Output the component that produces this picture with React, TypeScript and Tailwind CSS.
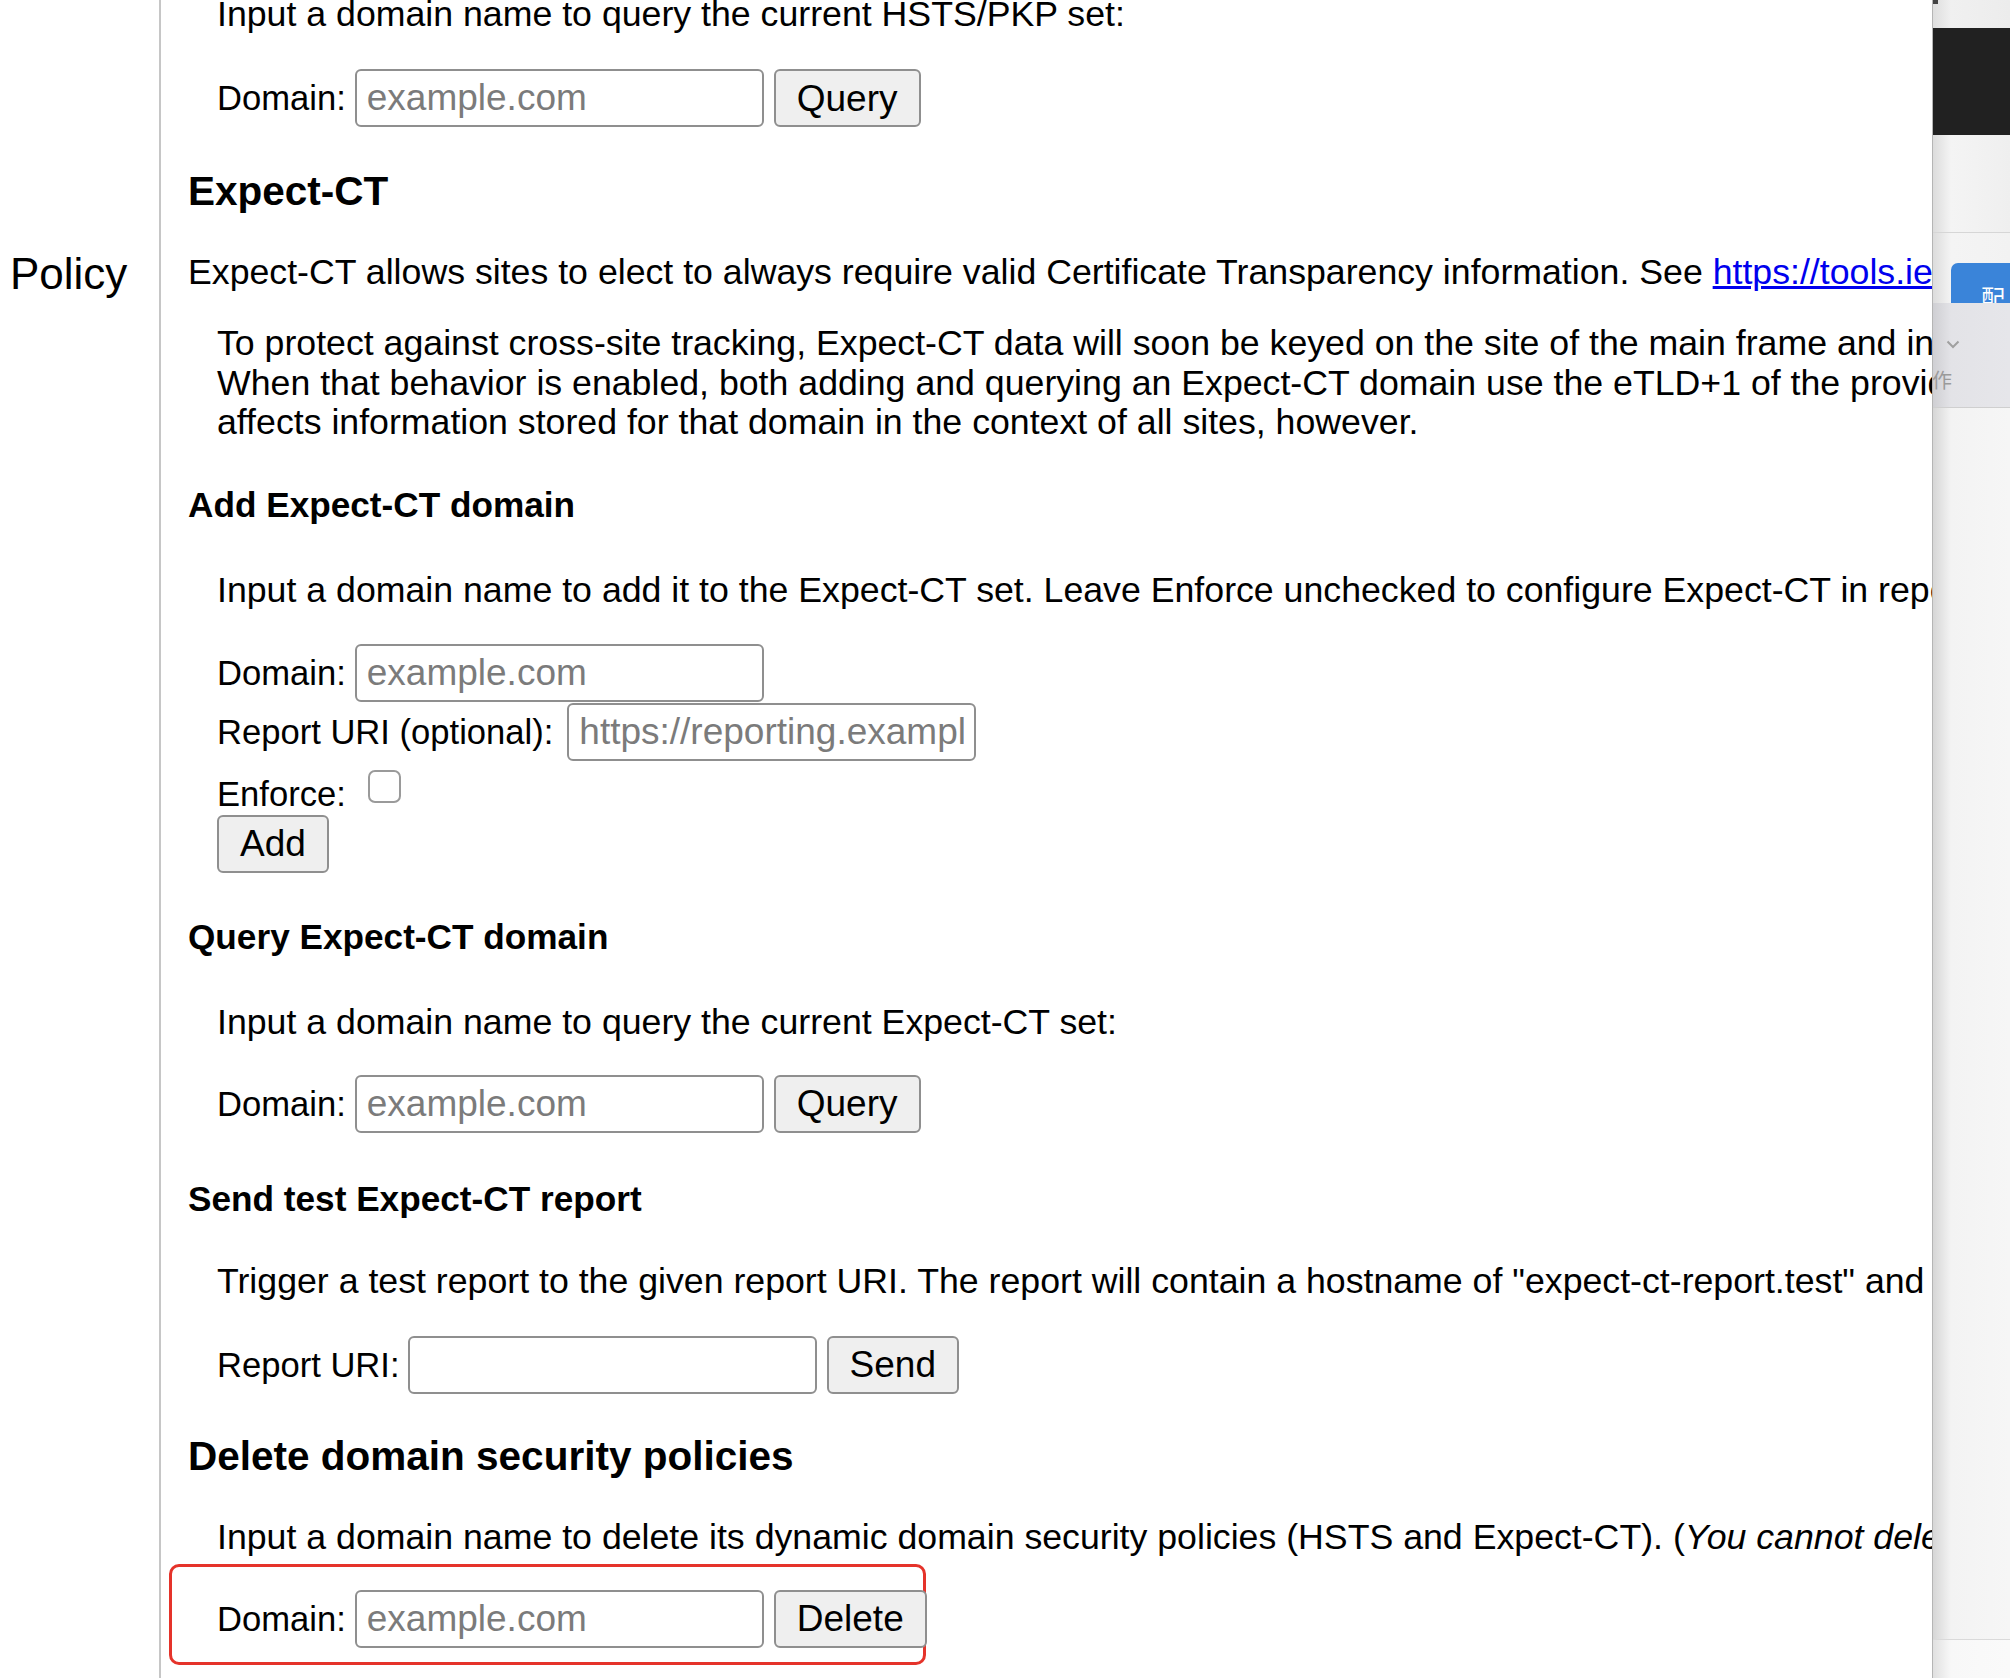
import React from "react";

const Field = ({ placeholder = "", w = "w-[409px]" }: { placeholder?: string; w?: string }) => (
  <input
    readOnly
    placeholder={placeholder}
    className={`${w} h-[58px] shrink-0 border-2 border-[#8f8f8f] rounded-[6px] bg-white px-[10px] text-[37px] text-black placeholder:text-[#7b7b7b] outline-none`}
  />
);

const Btn = ({ children }: { children: React.ReactNode }) => (
  <button className="h-[58px] shrink-0 px-[21px] border-2 border-[#8f8f8f] rounded-[6px] bg-[#efefef] text-[37px] leading-none text-black">
    {children}
  </button>
);

const Label = ({ children }: { children: React.ReactNode }) => (
  <span className="text-[34.6px]">{children}</span>
);

export default function App() {
  return (
    <div className="flex w-[2010px] h-[1678px] overflow-hidden bg-white text-black font-['Liberation_Sans',Arial,sans-serif]">
      {/* left nav column */}
      <div className="w-[161px] shrink-0 border-r-2 border-[#c6c6c6] pl-[10px] pt-[249px]">
        <div className="text-[44px] leading-[50px]">Policy</div>
      </div>

      {/* main content */}
      <div className="flex-1 min-w-0 overflow-hidden pl-[27px] flex flex-col whitespace-nowrap text-[35.7px] leading-[40px]">
        <p className="-mt-[6px] pl-[29px]">Input a domain name to query the current HSTS/PKP set:</p>
        <div className="mt-[35px] pl-[29px] flex items-center gap-[9px]">
          <Label>Domain:</Label>
          <Field placeholder="example.com" />
          <span className="ml-[1px]"><Btn>Query</Btn></span>
        </div>

        <h3 className="mt-[41px] text-[40.5px] leading-[47px] font-bold">Expect-CT</h3>
        <p className="mt-[37px]">
          Expect-CT allows sites to elect to always require valid Certificate Transparency information. See{" "}
          <a className="text-[#0000ee] underline">https://tools.ietf.org/html/draft-ietf-httpbis-expect-ct</a>
        </p>
        <p className="mt-[32px] pl-[29px] leading-[39.5px]">
          <span className="block">To protect against cross-site tracking, Expect-CT data will soon be keyed on the site of the main frame and in addition to the domain.</span>
          <span className="block">When that behavior is enabled, both adding and querying an Expect-CT domain use the eTLD+1 of the provided domain. Deleting</span>
          <span className="block">affects information stored for that domain in the context of all sites, however.</span>
        </p>

        <h4 className="mt-[42px] text-[35.2px] font-bold">Add Expect-CT domain</h4>
        <p className="mt-[45px] pl-[29px]">
          Input a domain name to add it to the Expect-CT set. Leave Enforce unchecked to configure Expect-CT in report-only mode.
        </p>
        <div className="mt-[34px] pl-[29px] flex items-center gap-[9px]">
          <Label>Domain:</Label>
          <Field placeholder="example.com" />
        </div>
        <div className="mt-[1px] pl-[29px] flex items-center gap-[14px]">
          <Label>Report URI (optional):</Label>
          <Field placeholder="https://reporting.example.com/" />
        </div>
        <div className="mt-[12px] pl-[29px] flex items-start h-[40px]">
          <span className="mt-[1px]"><Label>Enforce:</Label></span>
          <input
            type="checkbox"
            readOnly
            className="appearance-none ml-[22px] -mt-[3px] w-[33px] h-[33px] border-2 border-[#9a9a9a] rounded-[7px] bg-white"
          />
        </div>
        <div className="mt-[2px] pl-[29px] flex">
          <Btn>Add</Btn>
        </div>

        <h4 className="mt-[44px] text-[35.2px] font-bold">Query Expect-CT domain</h4>
        <p className="mt-[45px] pl-[29px]">Input a domain name to query the current Expect-CT set:</p>
        <div className="mt-[33px] pl-[29px] flex items-center gap-[9px]">
          <Label>Domain:</Label>
          <Field placeholder="example.com" />
          <span className="ml-[1px]"><Btn>Query</Btn></span>
        </div>

        <h4 className="mt-[46px] text-[35.2px] font-bold">Send test Expect-CT report</h4>
        <p className="mt-[42px] pl-[29px]">
          Trigger a test report to the given report URI. The report will contain a hostname of "expect-ct-report.test" and a certificate chain.
        </p>
        <div className="mt-[35px] pl-[29px] flex items-center gap-[8px]">
          <Label>Report URI:</Label>
          <Field />
          <span className="ml-[2px]"><Btn>Send</Btn></span>
        </div>

        <h3 className="mt-[39px] text-[40.5px] leading-[47px] font-bold">Delete domain security policies</h3>
        <p className="mt-[37px] pl-[29px]">
          Input a domain name to delete its dynamic domain security policies (HSTS and Expect-CT). (<i>You cannot delete preloaded entries.</i>)
        </p>
        <div className="mt-[7px] -ml-[19px] w-[757px] h-[101px] border-[3px] border-[#e5332a] rounded-[10px] pl-[45px] pt-[23px]">
          <div className="flex items-center gap-[9px]">
            <Label>Domain:</Label>
            <Field placeholder="example.com" />
            <span className="ml-[1px]"><Btn>Delete</Btn></span>
          </div>
        </div>
      </div>

      {/* right overlay panel (another app window edge) */}
      <div className="w-[78px] shrink-0 flex flex-col border-l border-[#b5b5b5] overflow-hidden">
        <div className="h-[28px] bg-[linear-gradient(to_right,#dedede,#f0f0f0_18px,#ececec)] relative">
          <div className="absolute left-0 top-0 w-[5px] h-[4px] bg-[#444]" />
        </div>
        <div className="h-[107px] bg-[#212121]" />
        <div className="h-[98px] bg-[linear-gradient(to_right,#dcdcdc,#f4f4f4_18px,#efefef)] border-b border-[#d6d6d6]" />
        <div className="h-[70px] bg-[linear-gradient(to_right,#dcdcdc,#f4f4f4_18px,#f2f2f2)] pt-[30px] pl-[18px] overflow-hidden">
          <div className="h-[50px] rounded-tl-[7px] bg-[#3a84d9] pl-[30px] pt-[20px] text-white text-[24px] leading-[28px] font-['Noto_Sans_CJK_SC',sans-serif]">
            配
          </div>
        </div>
        <div className="h-[105px] bg-[linear-gradient(to_right,#cfcfd3,#e3e3e7_18px,#e6e6ea)] border-b border-[#cfcfcf] flex flex-col">
          <svg className="ml-[13px] mt-[37px]" width="14" height="9" viewBox="0 0 14 9">
            <path d="M1.5 1.5 L7 7 L12.5 1.5" fill="none" stroke="#a0a0a0" strokeWidth="2" />
          </svg>
          <span className="mt-[20px] -ml-[1px] text-[20px] leading-[22px] text-[#9a9a9a] font-['Noto_Sans_CJK_SC',sans-serif]">作</span>
        </div>
        <div className="flex-1 bg-[linear-gradient(to_right,#d6d6d6,#f3f3f3_18px,#f6f6f6)] border-b border-[#dadada]" />
        <div className="h-[38px] bg-[linear-gradient(to_right,#e0e0e0,#f8f8f8_18px,#fafafa)]" />
      </div>
    </div>
  );
}
